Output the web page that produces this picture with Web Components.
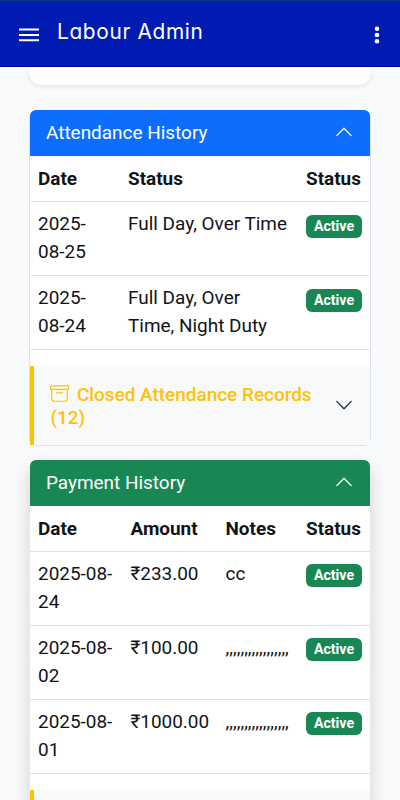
<!DOCTYPE html>
<html lang="en">
<head>
<meta charset="utf-8">
<title>Labour Admin</title>
<style>
html,body{margin:0;height:800px;overflow:hidden;background:#f8fafc}
body{font-family:Roboto,"Noto Sans",sans-serif;font-size:18.95px;line-height:28.4px;color:#111417}
</style>
</head>
<body>
<labour-page></labour-page>
<script>
const define = (name, html) => customElements.define(name, class extends HTMLElement {
  constructor() {
    super();
    this.attachShadow({mode: 'open'}).innerHTML = html;
  }
});

define('app-bar', `<style>
:host{display:flex;box-sizing:border-box;height:67px;background:#001bb1;border-top:1px solid #063b86;border-bottom:1px solid #0000a0;padding:0 20px 0 19px;align-items:center;color:#fff;position:relative;z-index:1}
svg{display:block}.menu{margin-top:3px}
h1{margin:-3px 0 0 18px;flex:1;font:400 20.8px/30px Inter,sans-serif;font-feature-settings:"cv11";letter-spacing:.68px;white-space:nowrap}
.dots{margin-top:2px}
</style>
<svg class="menu" width="20" height="14" viewBox="0 0 20 14" fill="#fff"><path d="M0 .6h20v2H0zM0 6h20v2H0zM0 11.3h20v2H0z"/></svg>
<h1><slot></slot></h1>
<svg class="dots" width="6" height="18" viewBox="0 0 6 18" fill="#fff"><circle cx="3" cy="2.8" r="2.3"/><circle cx="3" cy="9" r="2.3"/><circle cx="3" cy="15.2" r="2.3"/></svg>`);

define('chevron-icon', `<style>
:host{display:block;width:18px;height:18px;flex:none;margin-top:-2px}
:host([down]) svg{transform:rotate(180deg)}svg{display:block}
</style><svg width="18" height="18" viewBox="0 0 18 18" fill="none" stroke="currentColor" stroke-width="1.25" stroke-linecap="round" stroke-linejoin="round"><path d="M1.8 12.6 9 5.2l7.2 7.4"/></svg>`);

define('status-badge', `<style>
:host{display:block;box-sizing:border-box;width:56px;height:23px;margin-top:var(--badge-top,4.600px);border-radius:6px;background:#198754;color:#fff;font-size:14.2px;font-weight:700;line-height:23px;text-align:center}
</style><slot></slot>`);

define('record-row', `<style>
:host{display:grid;grid-template-columns:var(--cols);box-sizing:border-box;height:74px;padding:8px 0 0 8px;border-bottom:1px solid #dee2e6;background:#fff}
:host([head]){height:46px;padding-top:8.6px;font-weight:700}
::slotted(*){min-width:0}
</style><slot></slot>`);

define('closed-records', `<style>
:host{display:flex;box-sizing:border-box;height:79px;margin-top:16px;background:#f8f9fa;border-left:4px solid #ffc107;padding:16.5px 17px 16px 16.5px;justify-content:space-between;align-items:center;color:#212529}
.t{color:#ffc107;font-weight:500;line-height:23px;align-self:flex-start;white-space:nowrap}
svg{display:inline-block;vertical-align:-2.4px;margin:0 8px 0 -.6px}
</style>
<div class="t"><svg width="19" height="19" viewBox="0 0 16 16" fill="#ffc107"><path d="M0 2a1 1 0 0 1 1-1h14a1 1 0 0 1 1 1v2a1 1 0 0 1-1 1v7.5a2.5 2.5 0 0 1-2.5 2.5h-9A2.5 2.5 0 0 1 1 12.5V5a1 1 0 0 1-1-1zm2 3v7.5A1.5 1.5 0 0 0 3.5 14h9a1.5 1.5 0 0 0 1.5-1.5V5zm13-3H1v2h14zM5 7.5a.5.5 0 0 1 .5-.5h5a.5.5 0 0 1 0 1h-5a.5.5 0 0 1-.5-.5"/></svg><slot></slot></div>
<chevron-icon down></chevron-icon>`);

define('history-panel', `<style>
:host{display:block;box-sizing:border-box;width:342px;border:1px solid #dee2e6;border-radius:7px;background:#fff}
:host([tone=green]){border-color:transparent;background-clip:padding-box;box-shadow:0 8px 18px rgba(0,0,0,.15)}
header{display:flex;box-sizing:border-box;height:46px;margin-top:-1px;align-items:center;justify-content:space-between;padding:0 17px 0 16px;background:#0d6efd;color:#fff;border-radius:6px 6px 0 0}
:host([tone=green]) header{background:#198754}
</style><header><slot name="title"></slot><chevron-icon></chevron-icon></header><slot></slot>`);

define('labour-page', `<style>
:host{display:block;height:800px;overflow:hidden}
main{display:flex;flex-direction:column;align-items:flex-start;padding-left:29px}
.previous{width:342px;height:18px;background:#fff;border-radius:0 0 12px 12px;box-shadow:0 2px 4px rgba(0,0,0,.09);margin-bottom:25px}
.attendance{--cols:90px 178px 1fr;height:336px;margin-bottom:14px}
.payment{--cols:92.5px 95px 80.5px 1fr;--badge-top:4px;height:430px}
</style>
<app-bar>Labour Admin</app-bar>
<main>
<div class="previous"></div>
<history-panel class="attendance"><span slot="title">Attendance History</span>
<record-row head><span>Date</span><span>Status</span><span>Status</span></record-row>
<record-row><span>2025-<br>08-25</span><span>Full Day, Over Time</span><status-badge>Active</status-badge></record-row>
<record-row><span>2025-<br>08-24</span><span>Full Day, Over<br>Time, Night Duty</span><status-badge>Active</status-badge></record-row>
<closed-records>Closed Attendance Records<br>(12)</closed-records>
</history-panel>
<history-panel class="payment" tone="green"><span slot="title">Payment History</span>
<record-row head><span>Date</span><span>Amount</span><span>Notes</span><span>Status</span></record-row>
<record-row><span>2025-08-<br>24</span><span>₹233.00</span><span>cc</span><status-badge>Active</status-badge></record-row>
<record-row><span>2025-08-<br>02</span><span>₹100.00</span><span>,,,,,,,,,,,,,,,,,</span><status-badge>Active</status-badge></record-row>
<record-row><span>2025-08-<br>01</span><span>₹1000.00</span><span>,,,,,,,,,,,,,,,,,</span><status-badge>Active</status-badge></record-row>
<closed-records></closed-records>
</history-panel>
</main>`);
</script>
</body>
</html>
